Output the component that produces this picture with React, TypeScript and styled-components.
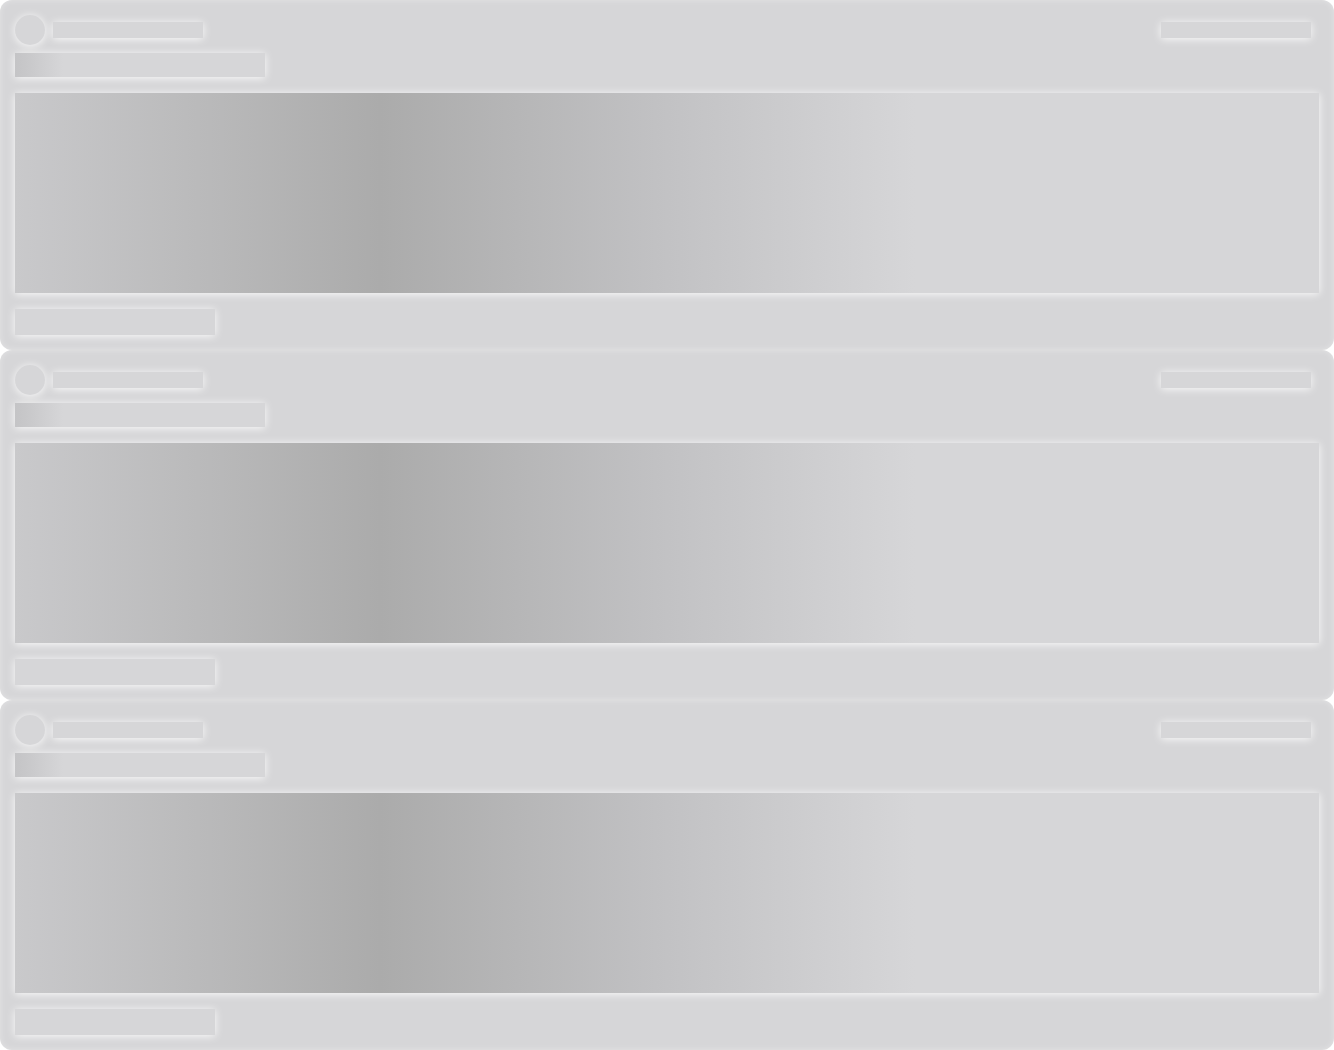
import styled, { createGlobalStyle } from 'styled-components';

const GlobalStyle = createGlobalStyle`
  html, body {
    margin: 0;
    padding: 0;
    background: #ffffff;
    font-family: 'Liberation Sans', Arial, sans-serif;
  }
`;

const BASE = '#d6d6d8';
const GLOW = '0 1px 8px rgba(255, 255, 255, 0.9)';

// COMPONENT one skeleton post card
const PostSkeletonView = () => {
  return (
    <Sk.Card className='Skeleton__card'>
      <Sk.Header>
        <Sk.Author>
          <Sk.Avatar />
          <Sk.Bar $w={150} $h={16} />
        </Sk.Author>
        <Sk.Bar $w={150} $h={16} $mr={8} />
      </Sk.Header>
      <Sk.Bar $w={250} $h={24} $mt={8} $shade='short' />
      <Sk.Media />
      <Sk.Bar $w={200} $h={26} $mt={16} />
    </Sk.Card>
  );
};

// COMPONENT feed list
const App = () => {
  return (
    <>
      <GlobalStyle />
      <Sk.Feed className='Skeleton__feed'>
        <PostSkeletonView />
        <PostSkeletonView />
        <PostSkeletonView />
      </Sk.Feed>
    </>
  );
};

// PARAM style
const Sk = {
  Feed: styled.main`
    display: flex;
    flex-direction: column;
    width: 100%;
  `,
  Card: styled.section`
    display: flex;
    flex-direction: column;
    height: 350px;
    box-sizing: border-box;
    padding: 15px;
    background-color: ${BASE};
    border-radius: 12px;
    box-shadow: inset 0 0 6px rgba(255, 255, 255, 0.35);
  `,
  Header: styled.div`
    display: flex;
    align-items: center;
    justify-content: space-between;
    height: 30px;
  `,
  Author: styled.div`
    display: flex;
    align-items: center;
    gap: 8px;
  `,
  Avatar: styled.div`
    width: 30px;
    height: 30px;
    border-radius: 50%;
    background-color: ${BASE};
    box-shadow: ${GLOW};
  `,
  Bar: styled.div<{ $w: number; $h: number; $mt?: number; $mr?: number; $shade?: 'short' }>`
    width: ${({ $w }) => $w}px;
    height: ${({ $h }) => $h}px;
    margin-top: ${({ $mt }) => $mt ?? 0}px;
    margin-right: ${({ $mr }) => $mr ?? 0}px;
    flex-shrink: 0;
    background: ${({ $shade }) =>
      $shade === 'short'
        ? `linear-gradient(90deg, #c4c4c6 0px, #c9c9cb 15px, ${BASE} 48px, ${BASE} 100%)`
        : BASE};
    box-shadow: ${GLOW};
  `,
  Media: styled.div`
    height: 200px;
    margin-top: 16px;
    background: linear-gradient(
      90deg,
      #c9c9cb 0px,
      #ababab 365px,
      #c1c1c3 640px,
      ${BASE} 900px,
      ${BASE} 100%
    );
    box-shadow: ${GLOW};
  `,
};

export default App;
